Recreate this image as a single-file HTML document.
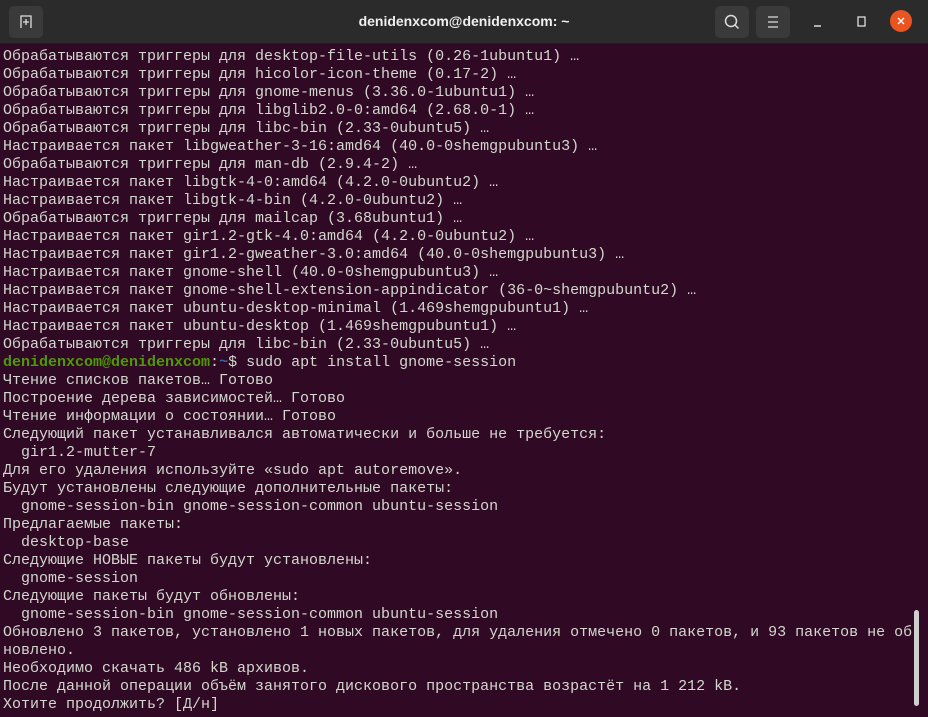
<!DOCTYPE html>
<html><head><meta charset="utf-8"><style>
*{margin:0;padding:0;box-sizing:border-box}
body{width:928px;height:717px;overflow:hidden;background:#300a24;position:relative;font-family:"Liberation Sans",sans-serif}
.tb{position:absolute;left:0;top:0;width:928px;height:44px;background:#2b2b2b;border-bottom:1px solid #1e1e1e}
.title{position:absolute;left:0;right:0;top:13px;text-align:center;color:#f0f0f0;font-weight:bold;font-size:14px}
.btn{position:absolute;top:6px;width:34px;height:32px;background:#3a3a3a;border-radius:5px}
pre{position:absolute;left:3px;top:48px;font-family:"Liberation Mono","DejaVu Sans Mono",monospace;font-size:15px;line-height:18px;color:#d3d7cf;white-space:pre}
.g{color:#4e9a06;font-weight:bold}.b{color:#3465a4;font-weight:bold}
.sb{position:absolute;left:914px;top:610px;width:5px;height:96px;background:#cfcfcf;border-radius:3px}
</style></head><body>
<div class="tb">
<div class="btn" style="left:9px"><svg width="34" height="32"><path d="M12 22V10h10v12M17 13v6M14 16h6" stroke="#ddd" stroke-width="1.3" fill="none"/></svg></div>
<div class="title">denidenxcom@denidenxcom: ~</div>
<div class="btn" style="left:715px"><svg width="34" height="32"><circle cx="16" cy="15" r="5.5" stroke="#ddd" stroke-width="1.5" fill="none"/><path d="M20 19l3.5 3.5" stroke="#ddd" stroke-width="1.5"/></svg></div>
<div class="btn" style="left:756px"><svg width="34" height="32"><path d="M12 11h10M12 16h10M12 21h10" stroke="#ddd" stroke-width="1.3"/></svg></div>
<svg style="position:absolute;left:812px;top:14px" width="100" height="20"><path d="M2 12h7" stroke="#ddd" stroke-width="1.5"/><rect x="46" y="3" width="7" height="9" stroke="#ddd" stroke-width="1.3" fill="none"/></svg>
<div style="position:absolute;left:890px;top:10px;width:22px;height:22px;border-radius:50%;background:#e95420"><svg width="22" height="22"><path d="M8 8l6 6M14 8l-6 6" stroke="#fff" stroke-width="1.4"/></svg></div>
</div>
<pre>Обрабатываются триггеры для desktop-file-utils (0.26-1ubuntu1) …
Обрабатываются триггеры для hicolor-icon-theme (0.17-2) …
Обрабатываются триггеры для gnome-menus (3.36.0-1ubuntu1) …
Обрабатываются триггеры для libglib2.0-0:amd64 (2.68.0-1) …
Обрабатываются триггеры для libc-bin (2.33-0ubuntu5) …
Настраивается пакет libgweather-3-16:amd64 (40.0-0shemgpubuntu3) …
Обрабатываются триггеры для man-db (2.9.4-2) …
Настраивается пакет libgtk-4-0:amd64 (4.2.0-0ubuntu2) …
Настраивается пакет libgtk-4-bin (4.2.0-0ubuntu2) …
Обрабатываются триггеры для mailcap (3.68ubuntu1) …
Настраивается пакет gir1.2-gtk-4.0:amd64 (4.2.0-0ubuntu2) …
Настраивается пакет gir1.2-gweather-3.0:amd64 (40.0-0shemgpubuntu3) …
Настраивается пакет gnome-shell (40.0-0shemgpubuntu3) …
Настраивается пакет gnome-shell-extension-appindicator (36-0~shemgpubuntu2) …
Настраивается пакет ubuntu-desktop-minimal (1.469shemgpubuntu1) …
Настраивается пакет ubuntu-desktop (1.469shemgpubuntu1) …
Обрабатываются триггеры для libc-bin (2.33-0ubuntu5) …
<span class="g">denidenxcom@denidenxcom</span>:<span class="b">~</span>$ sudo apt install gnome-session
Чтение списков пакетов… Готово
Построение дерева зависимостей… Готово
Чтение информации о состоянии… Готово
Следующий пакет устанавливался автоматически и больше не требуется:
  gir1.2-mutter-7
Для его удаления используйте «sudo apt autoremove».
Будут установлены следующие дополнительные пакеты:
  gnome-session-bin gnome-session-common ubuntu-session
Предлагаемые пакеты:
  desktop-base
Следующие НОВЫЕ пакеты будут установлены:
  gnome-session
Следующие пакеты будут обновлены:
  gnome-session-bin gnome-session-common ubuntu-session
Обновлено 3 пакетов, установлено 1 новых пакетов, для удаления отмечено 0 пакетов, и 93 пакетов не об
новлено.
Необходимо скачать 486 kB архивов.
После данной операции объём занятого дискового пространства возрастёт на 1 212 kB.
Хотите продолжить? [Д/н]</pre>
<div class="sb"></div>
</body></html>
